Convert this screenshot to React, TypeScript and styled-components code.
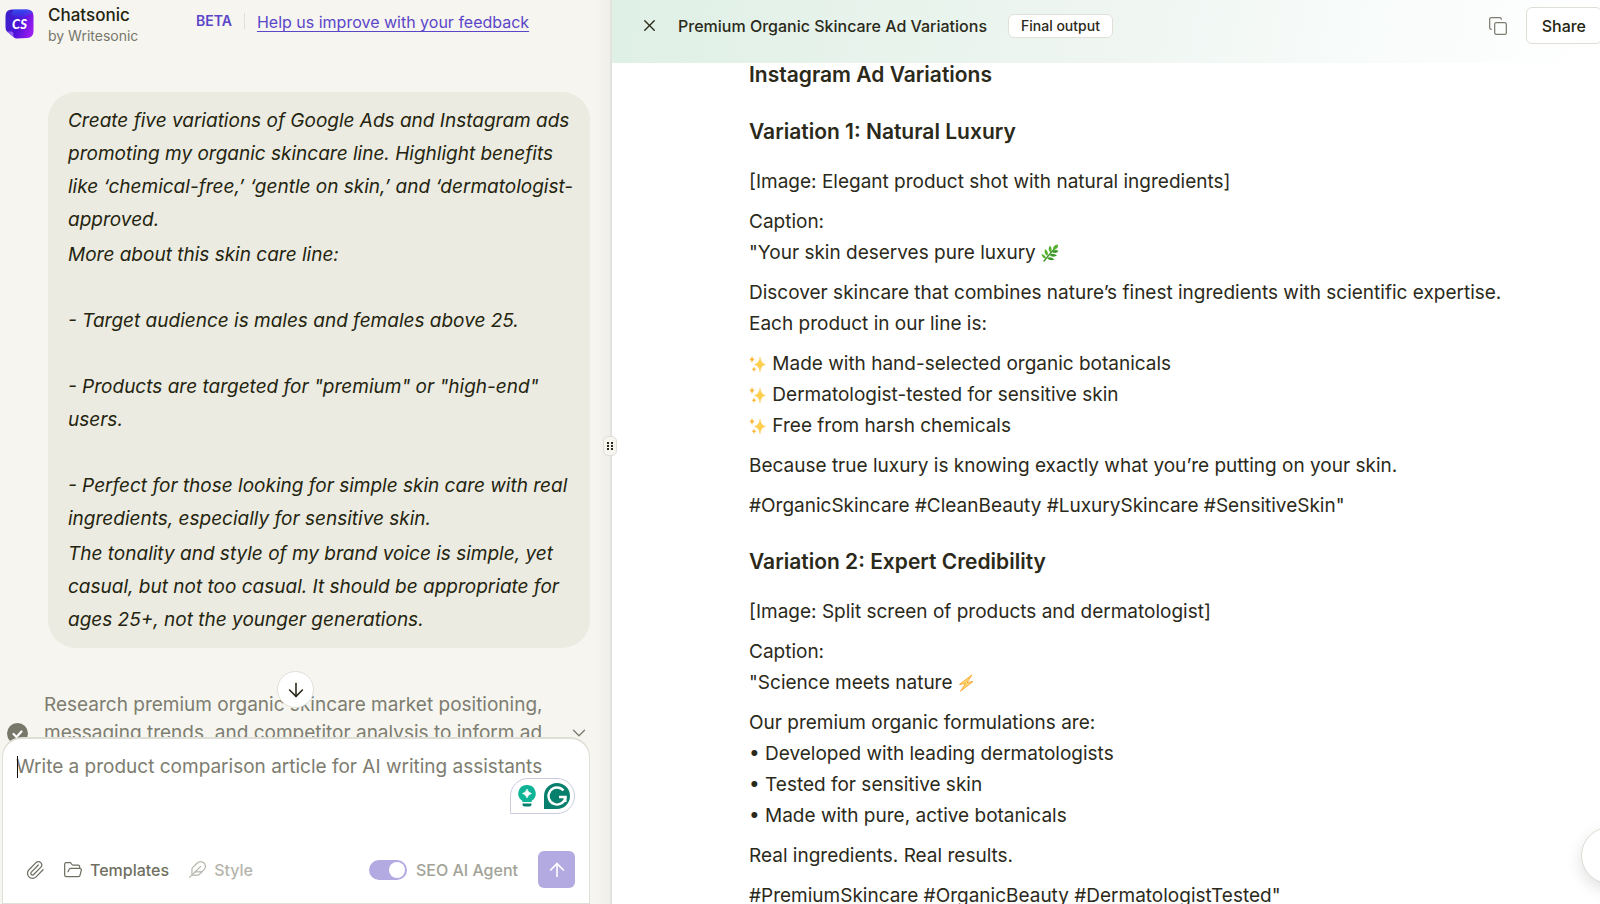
import React from 'react';
import styled, { createGlobalStyle, css } from 'styled-components';
import { ArrowDown, ArrowUp, ChevronDown, Copy, Feather, FolderOpen, Paperclip, X } from 'lucide-react';

const GlobalStyle = createGlobalStyle`
  *, *::before, *::after { box-sizing: border-box; }
  html, body, #root { height: 100%; }
  body {
    margin: 0;
    overflow: hidden;
    background: #fff;
    color: #2b2a1a;
    font-family: Inter, "Liberation Sans", sans-serif;
    font-size: 19px;
  }
  button { font: inherit; color: inherit; padding: 0; border: 0; background: none; cursor: pointer; }
  p, h1, h2, h3 { margin: 0; }
`;

const Shell = styled.div`
  display: flex;
  height: 100%;
  overflow: hidden;
`;

/* Chat side */

const ChatPane = styled.section`
  position: relative;
  display: flex;
  flex-direction: column;
  flex: 0 0 38.25%;
  min-width: 0;
  border-right: 2px solid #e3e3dd;
  background: linear-gradient(to left, #f0efeb 0, #f6f5f0 16px);
`;

const ChatHeader = styled.header`
  display: flex;
  align-items: flex-start;
  flex: none;
  height: 92px;
  padding: 5px 0 0 5px;
`;

const Brand = styled.div`
  display: flex;
  gap: 14px;
  width: 191px;
  svg { margin-top: 4px; }
`;

const BrandName = styled.h1`
  font-size: 17px;
  line-height: 20px;
  font-weight: 500;
  color: #24240f;
`;

const BrandBy = styled.p`
  font-size: 14px;
  line-height: 21px;
  color: #77776b;
`;

const Beta = styled.span`
  height: 16px;
  margin-top: 8px;
  padding-right: 12px;
  border-right: 1px solid #e0e0da;
  font-size: 14px;
  line-height: 16px;
  font-weight: 600;
  color: #5b46c9;
`;

const FeedbackLink = styled.a`
  margin: 6px 0 0 12px;
  font-size: 16px;
  line-height: 22px;
  color: #5b46c9;
  text-underline-offset: 3px;
`;

const Messages = styled.div`
  flex: 1;
  min-height: 0;
  overflow: hidden;
`;

const Bubble = styled.div`
  display: flex;
  flex-direction: column;
  gap: 2px;
  margin: 0 20px 0 48px;
  padding: 12px 12px 12px 20px;
  border-radius: 28px;
  background: #ebebe1;
  font-size: 19px;
  line-height: 33px;
  font-style: italic;
  color: #24240f;
  p { white-space: pre-line; }
`;

const Step = styled.div`
  display: flex;
  align-items: center;
  gap: 16px;
  margin: 43px 20px 0 7px;
  color: #7d7d70;
  p { flex: 1; font-size: 19px; line-height: 28px; }
  > svg { flex: none; }
`;

const ComposerDock = styled.div`
  position: relative;
  flex: none;
  margin: -24px 20px 0 2px;
`;

const ScrollDown = styled.button`
  position: absolute;
  top: -66px;
  left: 50%;
  display: grid;
  place-items: center;
  width: 37px;
  height: 37px;
  margin-left: -19px;
  border: 1px solid #e0e0d8;
  border-radius: 50%;
  background: #fff;
`;

const Composer = styled.form`
  position: relative;
  display: flex;
  flex-direction: column;
  height: 167px;
  border: 1px solid #dedfd6;
  border-width: 2px 1px 1px;
  border-radius: 20px 20px 0 0;
  background: #fff;
`;

const Prompt = styled.textarea`
  flex: 1;
  width: 100%;
  padding: 14px 13px;
  border: 0;
  outline: 0;
  resize: none;
  background: transparent;
  font: inherit;
  font-size: 19px;
  line-height: 28px;
  &::placeholder { color: #7d7d70; opacity: 1; }
`;

const Caret = styled.span`
  position: absolute;
  top: 17px;
  left: 14px;
  width: 1px;
  height: 22px;
  background: #111;
`;

const Assistant = styled.div`
  position: absolute;
  top: 39px;
  right: 14px;
  display: flex;
  align-items: center;
  justify-content: flex-end;
  gap: 8px;
  width: 65px;
  height: 36px;
  padding-right: 4px;
  border: 1px solid #cbcbe0;
  border-radius: 18px 18px 18px 0;
  background: #fff;
`;

const Tools = styled.div`
  display: flex;
  align-items: center;
  flex: none;
  height: 37px;
  margin: 0 14px 15px 22px;
`;

const Tool = styled.button<{ $muted?: boolean; $gap?: number }>`
  display: flex;
  align-items: center;
  gap: 7px;
  margin-right: ${(p) => p.$gap ?? 0}px;
  font-size: 16px;
  line-height: 24px;
  font-weight: 500;
  color: ${(p) => (p.$muted ? '#b5b5ab' : '#6f6f62')};
`;

const AgentLabel = styled.label`
  display: flex;
  align-items: center;
  gap: 9px;
  margin: 0 20px 0 auto;
  font-size: 16px;
  font-weight: 500;
  color: #a3a398;
`;

const Switch = styled.input`
  appearance: none;
  width: 38px;
  height: 20px;
  margin: 0;
  padding: 2px;
  border-radius: 10px;
  background: #b4aae2;
  &::before {
    content: '';
    display: block;
    width: 16px;
    height: 16px;
    border-radius: 50%;
    background: #fff;
  }
  &:checked::before { margin-left: 18px; }
`;

const Send = styled.button`
  display: grid;
  place-items: center;
  width: 37px;
  height: 37px;
  border-radius: 6px;
  background: #b4aae2;
  color: #fff;
`;

const Handle = styled.button`
  position: absolute;
  top: 436px;
  right: -7px;
  z-index: 2;
  display: grid;
  place-items: center;
  width: 14px;
  height: 20px;
  border: 1px solid #dedfd6;
  border-radius: 5px;
  background: #f6f5f0;
`;

/* Document side */

const DocPane = styled.section`
  display: flex;
  flex-direction: column;
  flex: 1;
  min-width: 0;
  background: #fff;
`;

const DocHeader = styled.header`
  display: flex;
  align-items: flex-start;
  flex: none;
  height: 63px;
  padding: 7px 0 0 28px;
  background: linear-gradient(100deg, #dff0e6 0%, #edf5f0 45%, #f9fcfb 80%, #ffffff 100%);
`;

const HeaderRow = styled.div`
  display: flex;
  align-items: center;
  flex: 1;
  height: 37px;
  margin-right: -2px;
`;

const IconButton = styled.button<{ $space: number }>`
  display: flex;
  margin-right: ${(p) => p.$space}px;
`;

const DocTitle = styled.h2`
  font-size: 16px;
  line-height: 24px;
  font-weight: 500;
`;

const Badge = styled.span`
  margin: 0 auto 0 21px;
  padding: 0 12px;
  border: 1px solid #e0e0d8;
  border-radius: 6px;
  background: #fff;
  font-size: 14px;
  line-height: 22px;
  font-weight: 500;
`;

const Share = styled.button`
  height: 37px;
  padding: 0 15px;
  border: 1px solid #dedfd6;
  border-radius: 6px;
  background: #fff;
  font-size: 16px;
  font-weight: 500;
  color: #24240f;
`;

const Doc = styled.article`
  flex: 1;
  min-height: 0;
  overflow: hidden;
  padding: 0 60px 0 137px;
  font-size: 19px;
  line-height: 31px;
`;

const heading = css`
  font-weight: 600;
  font-size: 21px;
  line-height: 24px;
`;

const SectionTitle = styled.h2`
  ${heading}
  margin-bottom: 33px;
`;

const VariationTitle = styled.h3`
  ${heading}
  margin: 29px 0 22px;
`;

const Para = styled.p`
  margin-bottom: 9px;
  white-space: pre-line;
`;

const Glyph = styled.svg`
  width: 18px;
  height: 18px;
  vertical-align: -3px;
`;

const HelpBubble = styled.button`
  position: fixed;
  right: -38px;
  bottom: 20px;
  width: 57px;
  height: 57px;
  border: 1px solid #dcdcd2;
  border-radius: 50%;
  background: #fff;
  box-shadow: 0 6px 16px rgba(0, 0, 0, 0.12);
`;

const Logo = () => (
  <svg width="29" height="30" viewBox="0 0 29 30" aria-hidden="true">
    <defs>
      <linearGradient id="logoFill" x1="0" y1="0.2" x2="1" y2="0.6">
        <stop offset="0" stopColor="#3a22c8" />
        <stop offset="0.5" stopColor="#4a12d8" />
        <stop offset="1" stopColor="#9a1cf0" />
      </linearGradient>
      <linearGradient id="logoTop" x1="0.5" y1="0" x2="0.5" y2="1">
        <stop offset="0" stopColor="#2a6cff" />
        <stop offset="1" stopColor="#2a6cff" stopOpacity="0" />
      </linearGradient>
    </defs>
    <path d="M7 0.500H22Q28.500 0.500 28.500 7V22Q28.500 28.500 22 29L12 29.500Q10 29.500 8.500 28L2 22.500Q0.500 21 0.500 18V7Q0.500 0.500 7 0.500Z" fill="url(#logoFill)" />
    <path d="M9 0.500H22Q26 0.500 27.500 4L14 11L6 5Z" fill="url(#logoTop)" opacity="0.6" />
    <path d="M2 22.500H6.500Q8.500 22.500 8.500 25V28L8 27.500Z" fill="#8f5cf5" />
    <text x="14.500" y="20" textAnchor="middle" fontFamily="Lato, sans-serif" fontWeight="900" fontStyle="italic" fontSize="13" fill="#fff">CS</text>
  </svg>
);

const Check = () => (
  <svg width="21" height="21" viewBox="0 0 21 21" aria-hidden="true">
    <circle cx="10.500" cy="10.500" r="10.500" fill="#77776a" />
    <path d="M6.500 11L9.500 14L14.500 8.500" fill="none" stroke="#fff" strokeWidth="2.200" strokeLinecap="round" strokeLinejoin="round" />
  </svg>
);

const Bulb = () => (
  <svg width="18" height="22" viewBox="0 0 18 22" aria-hidden="true">
    <path d="M9 0A8.500 8.500 0 0 1 14 15.500L13.500 17H4.500L4 15.500A8.500 8.500 0 0 1 9 0Z" fill="#0fb497" />
    <path d="M9 4Q10 7.500 13.500 8.500Q10 9.500 9 13Q8 9.500 4.500 8.500Q8 7.500 9 4Z" fill="#fff" stroke="#fff" strokeWidth="0.600" />
    <path d="M4.500 18.500H13.500V19.500Q13.500 21.500 11.500 21.500H6.500Q4.500 21.500 4.500 19.500Z" fill="#067f6c" />
  </svg>
);

const GrammarMark = () => (
  <svg width="26" height="26" viewBox="0 0 26 26" aria-hidden="true">
    <path d="M13 0A13 13 0 1 1 13 26H0V13A13 13 0 0 1 13 0Z" fill="#067f6c" />
    <path d="M19.500 7.500A8.500 8.500 0 1 0 21.500 14H15" fill="none" stroke="#fff" strokeWidth="2.400" />
    <path d="M21.500 13.500V19" fill="none" stroke="#fff" strokeWidth="2" />
  </svg>
);

const HandleDots = () => (
  <svg width="8" height="10" viewBox="0 0 8 10" aria-hidden="true" fill="#2b2a1a">
    {[1, 4, 7].map((y) => (
      <React.Fragment key={y}>
        <rect x="1" y={y} width="2" height="2" />
        <rect x="5" y={y} width="2" height="2" />
      </React.Fragment>
    ))}
  </svg>
);

const Sparkles = () => (
  <Glyph viewBox="0 0 18 18" aria-hidden="true">
    <path d="M11 2Q11.700 8.300 16.500 9.500Q11.700 10.700 11 17Q10.300 10.700 5.500 9.500Q10.300 8.300 11 2Z" fill="#fdd04e" stroke="#fbc456" strokeWidth="0.400" />
    <path d="M3 1Q3.400 3.700 5.500 4.500Q3.400 5.300 3 8Q2.600 5.300 0.500 4.500Q2.600 3.700 3 1Z" fill="#fbb83a" />
    <path d="M5 11.500Q5.300 13.700 7.200 14.300Q5.300 14.900 5 17Q4.700 14.900 2.800 14.300Q4.700 13.700 5 11.500Z" fill="#fbb83a" />
  </Glyph>
);

const Herb = () => (
  <Glyph viewBox="0 0 18 18" aria-hidden="true">
    <path d="M3 17Q7 12 15 3" fill="none" stroke="#3b8f22" strokeWidth="1.300" strokeLinecap="round" />
    <g fill="#55b02e">
      <path d="M12 6Q11.500 1 17 0.500Q17.500 5 12 6Z" />
      <path d="M9.500 8.500Q6 5.500 9 1.500Q12 5 9.500 8.500Z" />
      <path d="M6.500 12Q2.500 10 4 5Q8 7.500 6.500 12Z" />
      <path d="M5 14.500Q1.500 14.500 0.500 10Q4.500 10.500 5 14.500Z" />
    </g>
    <g fill="#3b9a26">
      <path d="M11 8Q13.500 4.500 17.500 7Q15 10.500 11 8Z" />
      <path d="M8.500 11Q12 8.500 16 11.500Q12 14 8.500 11Z" />
      <path d="M6 14Q9.500 12 13.500 15.500Q9 17.500 6 14Z" />
    </g>
  </Glyph>
);

const Bolt = () => (
  <Glyph viewBox="0 0 18 18" aria-hidden="true">
    <path d="M14 0.800L1.500 10.500L7.500 9.500L2.500 17.200L15 7.500L9 8.500Z" fill="#fdd870" stroke="#f7a530" strokeWidth="0.900" strokeLinejoin="round" />
  </Glyph>
);

export default function App() {
  return (
    <>
      <GlobalStyle />
      <Shell>
        <ChatPane>
          <ChatHeader>
            <Brand>
              <Logo />
              <div>
                <BrandName>Chatsonic</BrandName>
                <BrandBy>by Writesonic</BrandBy>
              </div>
            </Brand>
            <Beta>BETA</Beta>
            <FeedbackLink href="#feedback">Help us improve with your feedback</FeedbackLink>
          </ChatHeader>

          <Messages>
            <Bubble>
              <p>
                Create five variations of Google Ads and Instagram ads promoting my organic skincare line. Highlight
                benefits like ‘chemical-free,’ ‘gentle on skin,’ and ‘dermatologist-approved.
              </p>
              <p>
                {`More about this skin care line:

                - Target audience is males and females above 25.

                - Products are targeted for "premium" or "high-end" users.

                - Perfect for those looking for simple skin care with real ingredients, especially for sensitive skin.`}
              </p>
              <p>
                The tonality and style of my brand voice is simple, yet casual, but not too casual. It should be
                appropriate for ages 25+, not the younger generations.
              </p>
            </Bubble>
            <Step>
              <Check />
              <p>
                Research premium organic skincare market positioning, messaging trends, and competitor analysis to
                inform ad variations
              </p>
              <ChevronDown size={22} strokeWidth={1.5} />
            </Step>
          </Messages>

          <ComposerDock>
            <ScrollDown type="button" aria-label="Scroll to latest">
              <ArrowDown size={22} strokeWidth={1.75} />
            </ScrollDown>
            <Composer onSubmit={(e) => e.preventDefault()}>
              <Prompt aria-label="Message" placeholder="Write a product comparison article for AI writing assistants" />
              <Caret />
              <Assistant>
                <Bulb />
                <GrammarMark />
              </Assistant>
              <Tools>
                <Tool type="button" aria-label="Attach file" $gap={18}>
                  <Paperclip size={20} strokeWidth={1.5} />
                </Tool>
                <Tool type="button" $gap={19}>
                  <FolderOpen size={20} strokeWidth={1.5} />
                  Templates
                </Tool>
                <Tool type="button" $muted>
                  <Feather size={19} strokeWidth={1.5} />
                  Style
                </Tool>
                <AgentLabel>
                  <Switch type="checkbox" role="switch" defaultChecked />
                  SEO AI Agent
                </AgentLabel>
                <Send type="submit" aria-label="Send">
                  <ArrowUp size={22} strokeWidth={1.75} />
                </Send>
              </Tools>
            </Composer>
          </ComposerDock>

          <Handle type="button" aria-label="Resize panels">
            <HandleDots />
          </Handle>
        </ChatPane>

        <DocPane>
          <DocHeader>
            <HeaderRow>
              <IconButton type="button" aria-label="Close" $space={19}>
                <X size={19} strokeWidth={1.75} />
              </IconButton>
              <DocTitle>Premium Organic Skincare Ad Variations</DocTitle>
              <Badge>Final output</Badge>
              <IconButton type="button" aria-label="Copy" $space={18}>
                <Copy size={20} strokeWidth={1.5} color="#7d7d70" />
              </IconButton>
              <Share type="button">Share</Share>
            </HeaderRow>
          </DocHeader>
          <Doc>
            <SectionTitle>Instagram Ad Variations</SectionTitle>

            <VariationTitle>Variation 1: Natural Luxury</VariationTitle>
            <Para>[Image: Elegant product shot with natural ingredients]</Para>
            <Para>
              Caption:{'\n'}"Your skin deserves pure luxury <Herb />
            </Para>
            <Para>
              Discover skincare that combines nature’s finest ingredients with scientific expertise.{'\n'}Each product
              in our line is:
            </Para>
            <Para>
              <Sparkles /> Made with hand-selected organic botanicals{'\n'}
              <Sparkles /> Dermatologist-tested for sensitive skin{'\n'}
              <Sparkles /> Free from harsh chemicals
            </Para>
            <Para>Because true luxury is knowing exactly what you’re putting on your skin.</Para>
            <Para>#OrganicSkincare #CleanBeauty #LuxurySkincare #SensitiveSkin"</Para>

            <VariationTitle>Variation 2: Expert Credibility</VariationTitle>
            <Para>[Image: Split screen of products and dermatologist]</Para>
            <Para>
              Caption:{'\n'}"Science meets nature <Bolt />
            </Para>
            <Para>
              Our premium organic formulations are:{'\n'}• Developed with leading dermatologists{'\n'}• Tested for
              sensitive skin{'\n'}• Made with pure, active botanicals
            </Para>
            <Para>Real ingredients. Real results.</Para>
            <Para>#PremiumSkincare #OrganicBeauty #DermatologistTested"</Para>
          </Doc>
        </DocPane>
        <HelpBubble type="button" aria-label="Help" />
      </Shell>
    </>
  );
}
